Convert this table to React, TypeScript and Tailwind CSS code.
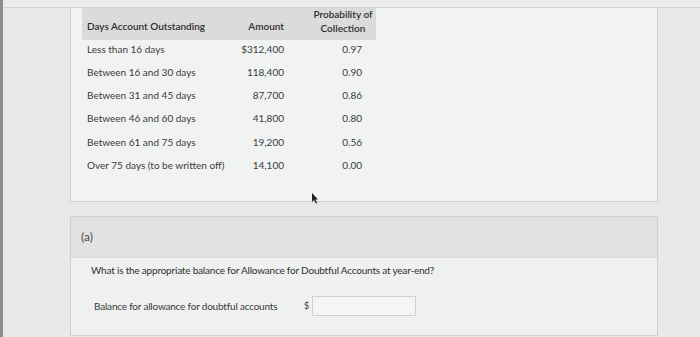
const rows = [
  { label: "Less than 16 days", amount: "$312,400", prob: "0.97" },
  { label: "Between 16 and 30 days", amount: "118,400", prob: "0.90" },
  { label: "Between 31 and 45 days", amount: "87,700", prob: "0.86" },
  { label: "Between 46 and 60 days", amount: "41,800", prob: "0.80" },
  { label: "Between 61 and 75 days", amount: "19,200", prob: "0.56" },
  { label: "Over 75 days (to be written off)", amount: "14,100", prob: "0.00" },
];

export default function App() {
  return (
    <div
      className="w-[700px] h-[337px] overflow-hidden bg-[#e7e8e8] border-l-[3px] border-[#8d8d8d] relative"
      style={{ fontFamily: "Lato, 'Open Sans', sans-serif" }}
    >
      <div className="h-[8px] bg-[#ececec] border-b border-[#d2d3d3]" />

      <div className="ml-[67px] w-[588px]">
        {/* Aging table */}
        <div className="h-[194px] bg-[#f1f2f2] border-l border-r border-b border-[#d0d1d1] pl-[11px]">
          <div className="w-[294px] text-[10px] text-[#3b3b3b]">
            <div className="flex h-[32px] items-end bg-[#dadbdb] pb-[6px] text-[#2f2f2f] font-semibold">
              <div className="w-[150px] pl-[5px]">Days Account Outstanding</div>
              <div className="w-[78px] pr-[26px] text-right">Amount</div>
              <div className="w-[66px] text-center leading-[14px] -mb-[1px]">
                Probability of
                <br />
                Collection
              </div>
            </div>
            <div className="flex flex-col gap-[5.3px]">
              {rows.map((r) => (
                <div key={r.label} className="flex h-[18px] items-center">
                  <div className="w-[150px] pl-[5px]">{r.label}</div>
                  <div className="w-[78px] pr-[26px] text-right">{r.amount}</div>
                  <div className="w-[66px] pr-[14px] text-right">{r.prob}</div>
                </div>
              ))}
            </div>
          </div>
        </div>

        {/* Part (a) */}
        <div className="mt-[14px] h-[120px] bg-[#eff0f0] border border-[#d0d1d1]">
          <div className="h-[41px] bg-[#e1e2e2] border-b border-[#d6d7d7] flex items-center pl-[10px] text-[12px] text-[#4a4a4a]">
            (a)
          </div>
          <div className="pl-[20px] pt-[5px] text-[10px] text-[#2f2f2f] tracking-[-0.2px]">
            What is the appropriate balance for Allowance for Doubtful Accounts at year-end?
          </div>
          <div className="flex items-center mt-[18px] pl-[23px] text-[10px] text-[#3a3a3a]">
            <span className="w-[210px] tracking-[-0.2px]">Balance for allowance for doubtful accounts</span>
            <span className="w-[8px] text-[9px]">$</span>
            <div className="w-[104px] h-[20px] bg-[#f4f5f5] border border-[#cfd0d0]" />
          </div>
        </div>
      </div>

      {/* mouse cursor */}
      <svg className="absolute left-[308px] top-[193px]" width="8" height="11" viewBox="0 0 8 11">
        <path d="M1 0 L1 9 L3 7 L5 10.5 L6.2 10 L4.4 6.6 L7 6.4 Z" fill="#222" />
      </svg>
    </div>
  );
}
